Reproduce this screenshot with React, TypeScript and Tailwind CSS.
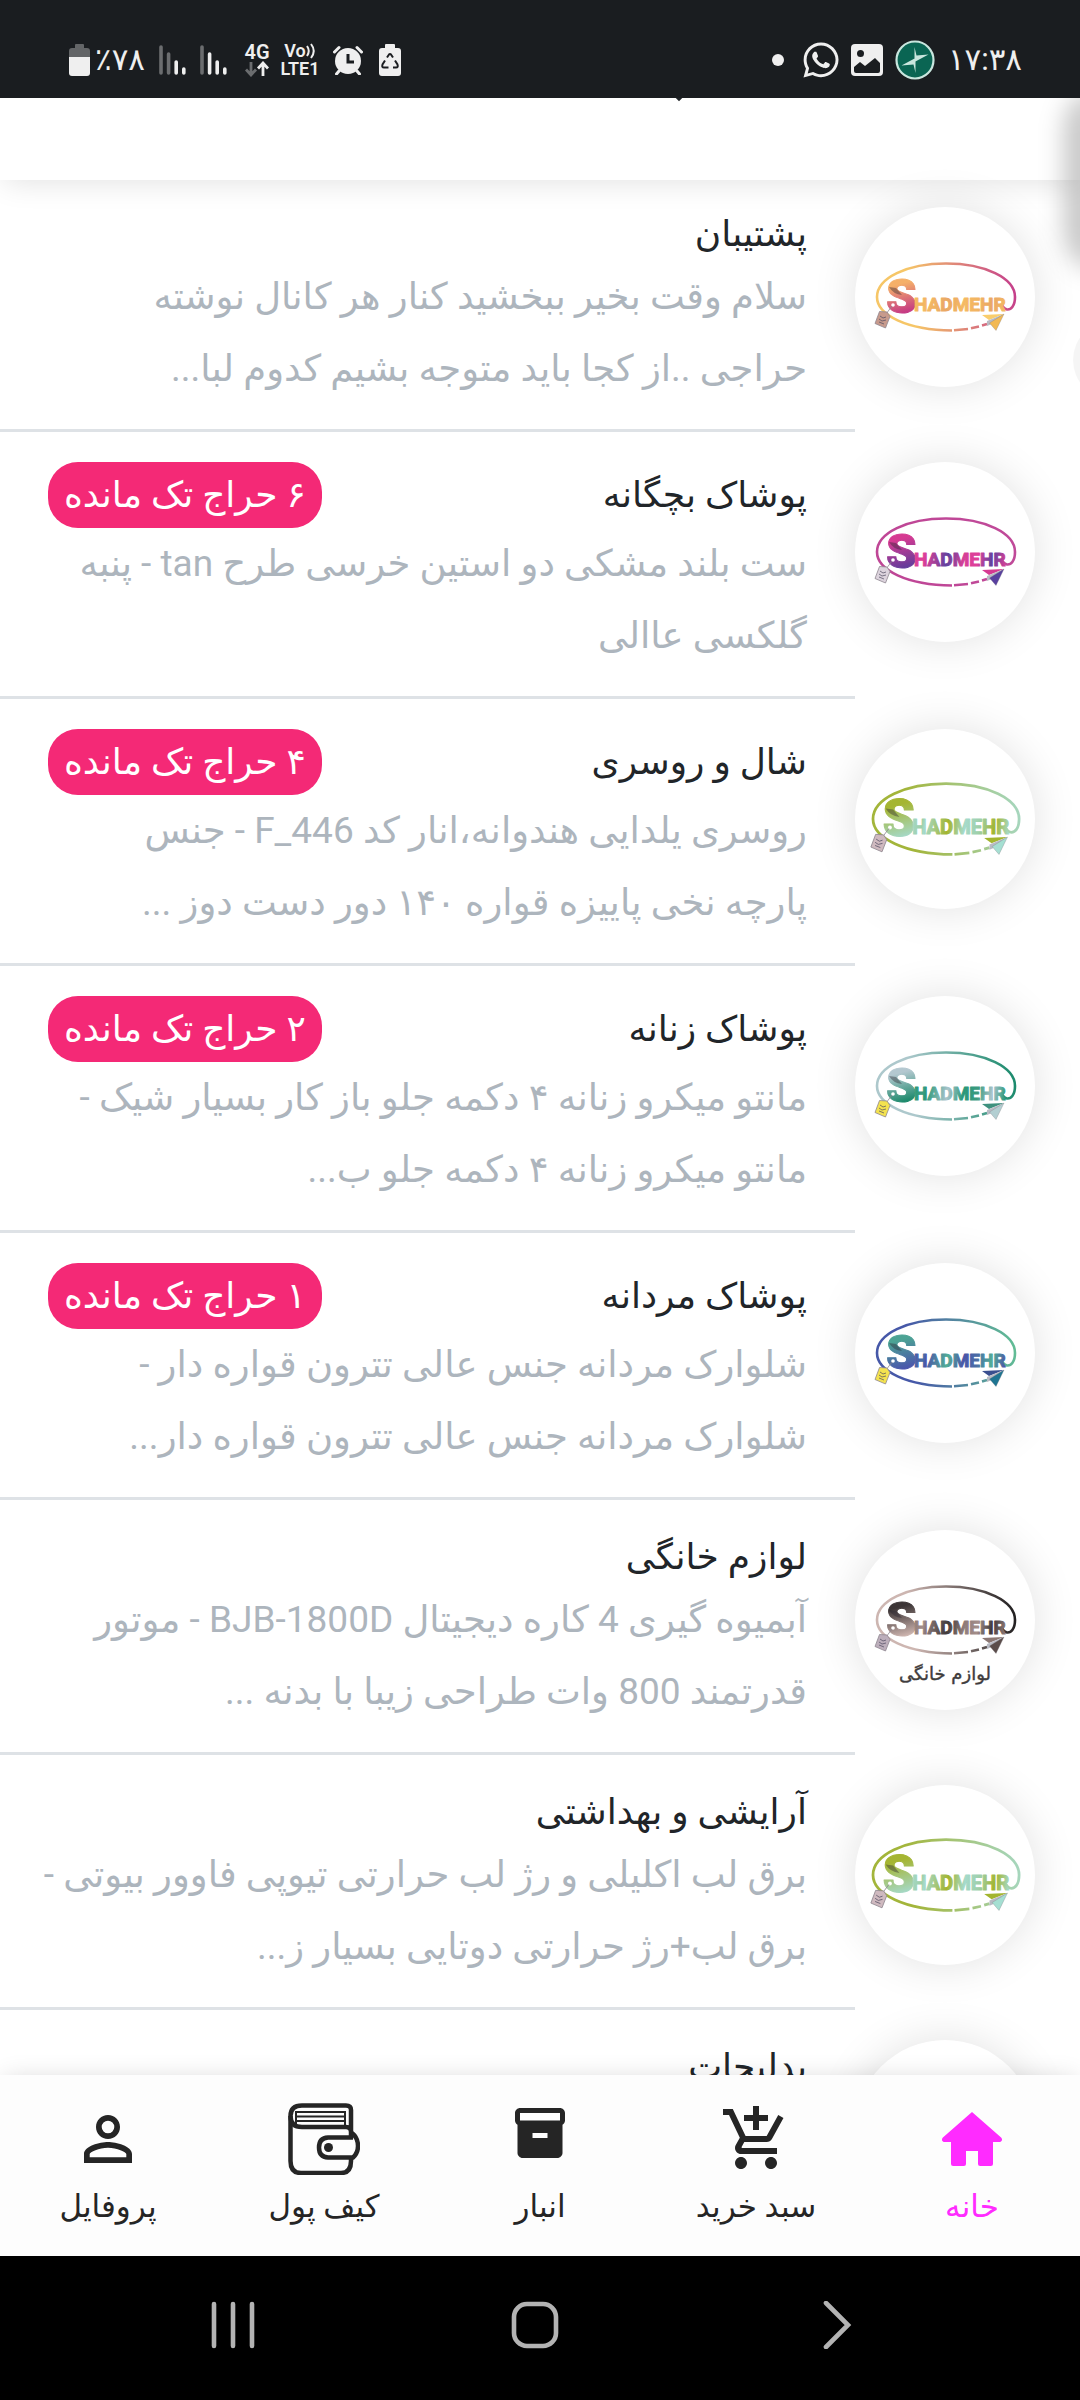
import React from "react";
import { FaWhatsapp } from "react-icons/fa";
import { MdAddShoppingCart, MdInventory2, MdPersonOutline } from "react-icons/md";

type Palette = {
  id: string;
  ring: [string, string];
  big: [string, string];
  letters: [string, string, string];
  plane: [string, string];
  tag: string;
  large?: boolean;
  caption?: string;
};

type Channel = {
  name: string;
  badge?: string;
  lines: string[];
  logo: Palette;
};

const green: Omit<Palette, "id"> = {
  ring: ["#a3b53a", "#a6d6be"],
  big: ["#a5b532", "#a5dacb"],
  letters: ["#a5dacb", "#a3b52e", "#9fcfa8"],
  plane: ["#a3b52e", "#a5dfd2"],
  tag: "#cfb9bf",
  large: true,
};

const teal: Omit<Palette, "id"> = {
  ring: ["#adc8cc", "#1a8a6c"],
  big: ["#b4c8d0", "#108463"],
  letters: ["#2a9878", "#a9c4cb", "#3c9b80"],
  plane: ["#3f917e", "#b3cfd2"],
  tag: "#f3e24f",
};

const channels: Channel[] = [
  {
    name: "پشتیبان",
    lines: ["سلام وقت بخیر ببخشید کنار هر کانال نوشته", "حراجی ..از کجا باید متوجه بشیم کدوم لبا..."],
    logo: {
      id: "support",
      ring: ["#f6c667", "#c53f8b"],
      big: ["#f5b068", "#c12f86"],
      letters: ["#f5ba62", "#e9a765", "#f2b462"],
      plane: ["#f9cd6c", "#f2b953"],
      tag: "#c79a8c",
    },
  },
  {
    name: "پوشاک بچگانه",
    badge: "۶ حراج تک مانده",
    lines: ["ست بلند مشکی دو استین خرسی طرح tan - پنبه", "گلکسی عاالی"],
    logo: {
      id: "kids",
      ring: ["#bf4696", "#c04a99"],
      big: ["#d63a92", "#5a3d9b"],
      letters: ["#d63f96", "#5f419e", "#e0409a"],
      plane: ["#d63a92", "#59409f"],
      tag: "#dcd3dd",
    },
  },
  {
    name: "شال و روسری",
    badge: "۴ حراج تک مانده",
    lines: ["روسری یلدایی هندوانه،انار کد F_446 - جنس", "پارچه نخی پاییزه قواره ۱۴۰ دور دست دوز ..."],
    logo: { id: "scarf", ...green },
  },
  {
    name: "پوشاک زنانه",
    badge: "۲ حراج تک مانده",
    lines: ["مانتو میکرو زنانه ۴ دکمه جلو باز کار بسیار شیک -", "مانتو میکرو زنانه ۴ دکمه جلو ب..."],
    logo: { id: "women", ...teal },
  },
  {
    name: "پوشاک مردانه",
    badge: "۱ حراج تک مانده",
    lines: ["شلوارک مردانه جنس عالی تترون قواره دار -", "شلوارک مردانه جنس عالی تترون قواره دار..."],
    logo: {
      id: "men",
      ring: ["#4658a8", "#62bd95"],
      big: ["#4ca394", "#4a4fae"],
      letters: ["#4a55a8", "#52ae96", "#4a6fa5"],
      plane: ["#3a4f8f", "#1f7592"],
      tag: "#f3e24f",
    },
  },
  {
    name: "لوازم خانگی",
    lines: ["آبمیوه گیری 4 کاره دیجیتال BJB-1800D - موتور", "قدرتمند 800 وات طراحی زیبا با بدنه ..."],
    logo: {
      id: "home",
      ring: ["#cdb6b1", "#211f20"],
      big: ["#3c3536", "#d6bcb6"],
      letters: ["#8d7a78", "#3f393a", "#a48e8a"],
      plane: ["#8b7773", "#5b4d4b"],
      tag: "#bcaebb",
      caption: "لوازم خانگی",
    },
  },
  {
    name: "آرایشی و بهداشتی",
    lines: ["برق لب اکلیلی و رژ لب حرارتی تیوپی فاوور بیوتی -", "برق لب+رژ حرارتی دوتایی بسیار ز..."],
    logo: { id: "beauty", ...green },
  },
  {
    name: "بدلیجات",
    lines: [],
    logo: { id: "jewelry", ...teal },
  },
];

function Logo({ p }: { p: Palette }) {
  const ring = `ring-${p.id}`;
  const big = `big-${p.id}`;
  const letters = `letters-${p.id}`;
  return (
    <svg
      viewBox={p.large ? "5 5 170 170" : "0 0 180 180"}
      direction="ltr"
      className="size-full"
      role="img"
      aria-label="Shadmehr"
    >
      <defs>
        <linearGradient id={ring} gradientUnits="userSpaceOnUse" x1="22" y1="100" x2="160" y2="80">
          <stop offset="0.25" stopColor={p.ring[0]} />
          <stop offset="1" stopColor={p.ring[1]} />
        </linearGradient>
        <linearGradient id={big} gradientUnits="userSpaceOnUse" x1="40" y1="70" x2="50" y2="108">
          <stop offset="0.2" stopColor={p.big[0]} />
          <stop offset="1" stopColor={p.big[1]} />
        </linearGradient>
        <linearGradient id={letters} gradientUnits="userSpaceOnUse" x1="58" y1="88" x2="150" y2="104">
          <stop offset="0" stopColor={p.letters[0]} />
          <stop offset="0.12" stopColor={p.letters[2]} />
          <stop offset="0.15" stopColor={p.letters[0]} />
          <stop offset="0.38" stopColor={p.letters[1]} />
          <stop offset="0.55" stopColor={p.letters[0]} />
          <stop offset="0.7" stopColor={p.letters[2]} />
          <stop offset="0.85" stopColor={p.letters[1]} />
          <stop offset="1" stopColor={p.letters[0]} />
        </linearGradient>
      </defs>
      <g fill="none" stroke={`url(#${ring})`} strokeWidth="2.6">
        <path d="M97 123.500C52 123 22 108 22 90C22 71 52 56.500 91 56.500C130 56.500 160 71 160 90C160 99 156 103 152 102.500C149 102 148 100 147 98" />
        <path d="M99 123.300L113 122M116 121.300L124 119.500M127 118.500L132 117" />
      </g>
      <text
        x="31"
        y="106"
        fontFamily="Roboto, sans-serif"
        fontWeight="900"
        fontSize="49"
        fill={`url(#${big})`}
        stroke={`url(#${big})`}
        strokeWidth="1"
        strokeLinejoin="round"
      >
        S
      </text>
      <path d="M34 80q4 7 13 8l-6-7z" fill="#2b2630" opacity="0.4" />
      <circle cx="38" cy="98" r="1.800" fill="#fff" />
      <text
        x="59"
        y="104"
        fontFamily="Roboto, sans-serif"
        fontWeight="700"
        fontSize="19"
        fill={`url(#${letters})`}
        stroke={`url(#${letters})`}
        strokeWidth="1"
        strokeLinejoin="round"
      >
        HADMEHR
      </text>
      <path d="M37 99L31 107" stroke="#8f8790" strokeWidth="0.800" />
      <path d="M24.500 104.500L32 105L35 109.500L30.500 121L20 116.500Z" fill={p.tag} stroke="#8f8790" strokeWidth="0.800" strokeLinejoin="round" />
      <path d="M25 109l3 2 3-1M24 112l3 2 4-1M24 115l5 2" fill="none" stroke="#4f4a60" strokeWidth="0.700" />
      <path d="M149 107L127 108L134 113Z" fill={p.plane[0]} />
      <path d="M149 107L132 114L132 119L137 117Z" fill="#b9bbc4" />
      <path d="M149 107L134.500 116L141 123.500Z" fill={p.plane[1]} stroke="#77757c" strokeWidth="0.300" />
      {p.caption && (
        <text
          x="90"
          y="150"
          direction="rtl"
          textAnchor="middle"
          fontFamily="'DejaVu Sans', sans-serif"
          fontSize="18"
          fill="#403c3d"
          stroke="#403c3d"
          strokeWidth="0.400"
        >
          {p.caption}
        </text>
      )}
    </svg>
  );
}

function Signal({ dim }: { dim: number }) {
  const bars = [2, 9, 17, 24];
  return (
    <svg viewBox="0 0 28 32" className="h-8 w-7 shrink-0" aria-hidden="true">
      {bars.map((y, i) => (
        <path
          key={y}
          d={`M${2 + i * 7.6} ${y + 1}V29`}
          stroke={i < dim ? "#6b6d6f" : "#efefef"}
          strokeWidth="3.600"
          strokeLinecap="round"
        />
      ))}
    </svg>
  );
}

function StatusBar() {
  return (
    <header
      dir="ltr"
      className="relative z-20 flex h-[98px] shrink-0 items-center justify-between bg-[#1a1d20] pt-[22px] pr-[58px] pl-[69px] text-[#efefef]"
    >
      <div className="flex items-center">
        <svg viewBox="0 0 22 34" className="h-[34px] w-[22px]" aria-label="Battery">
          <path d="M3 5h3V2q0-1 1-1h7q1 0 1 1v3h3q3 0 3 3v6H0V8q0-3 3-3z" fill="#636567" />
          <path d="M0 14h21v16q0 3-3 3H3q-3 0-3-3z" fill="#efefef" />
        </svg>
        <span className="ml-1 w-16 font-['Roboto','DejaVu_Sans',sans-serif] text-[31px] leading-8">٪۷۸</span>
        <Signal dim={2} />
        <span className="w-[13px]" />
        <Signal dim={1} />
        <span className="ml-[15px] flex w-7 flex-col items-center font-['Roboto',sans-serif] text-xl leading-[18px] font-semibold">
          4G
          <svg viewBox="0 0 24 16" className="h-4 w-6" fill="none" strokeWidth="2.800" aria-hidden="true">
            <path d="M6 1v13M1 8.500l5 5.500 5-5.500" stroke="#6b6d6f" />
            <path d="M18 15V2M13 7.500L18 2l5 5.500" stroke="#efefef" />
          </svg>
        </span>
        <span className="ml-2 flex w-[42px] flex-col items-center font-['Roboto',sans-serif] text-lg leading-[18px] font-semibold">
          <span className="flex items-center">
            Vo
            <svg viewBox="0 0 10 18" className="h-[18px] w-2.5" fill="none" stroke="#efefef" strokeWidth="2" aria-hidden="true">
              <path d="M1 4q3.500 5 0 10M5 2q5.500 7 0 14" />
            </svg>
          </span>
          <span>LTE1</span>
        </span>
        <svg viewBox="0 0 30 30" className="ml-3 size-[30px]" aria-label="Alarm">
          <circle cx="15" cy="16" r="13" fill="#efefef" />
          <path d="M1.500 7L6 2.500M28.500 7L24 2.500M6 26l-2.500 3M24 26l2.500 3" stroke="#efefef" strokeWidth="3" strokeLinecap="round" />
          <path d="M15 9v8h6" fill="none" stroke="#1a1d20" strokeWidth="3" />
        </svg>
        <svg viewBox="0 0 22 34" className="ml-4 h-[34px] w-[22px]" aria-label="Battery saver">
          <path d="M3 5h3V2q0-1 1-1h8q1 0 1 1v3h3q3 0 3 3v22q0 3-3 3H3q-3 0-3-3V8q0-3 3-3z" fill="#efefef" />
          <path
            d="M8 14.500l2-3q1-1.200 2 0l2 3M16 17.500l2.500 4q1 3-1.500 3h-3M9.500 24.500H5q-2.500 0-1.500-3l2.500-4"
            fill="none"
            stroke="#1a1d20"
            strokeWidth="2"
          />
        </svg>
      </div>
      <div className="flex items-center">
        <span className="mr-[17px] size-3 rounded-full bg-[#efefef]" />
        <FaWhatsapp className="mr-2.5 size-10" aria-label="WhatsApp" />
        <svg viewBox="0 0 32 32" className="mr-3 size-8" aria-label="Gallery">
          <rect width="32" height="32" rx="4" fill="#efefef" />
          <circle cx="9.500" cy="9.500" r="3.500" fill="#1a1d20" />
          <path d="M3 23l6-5 5 4 10-8 5 5v8q0 2-2 2H5q-2 0-2-2z" fill="#1a1d20" />
        </svg>
        <svg viewBox="0 0 40 40" className="mr-3 size-10" aria-label="App notification">
          <circle cx="20" cy="20" r="18.500" fill="#0a6553" stroke="#c9e6de" strokeWidth="2.200" />
          <path d="M19.500 7l2 8.500 12-1-14 7.500zM20.500 33l-2-8.500-12 1 14-7.500z" fill="#c9e6de" />
        </svg>
        <span className="w-[75px] text-right font-['Roboto','DejaVu_Sans',sans-serif] text-[31px] leading-8">۱۷:۳۸</span>
      </div>
    </header>
  );
}

function ChannelRow({ channel }: { channel: Channel }) {
  return (
    <li>
      <a href="#" className="flex">
        <div className="mr-[45px] w-[180px] shrink-0 pt-[30px]">
          <div className="size-[180px] rounded-full bg-white shadow-[0_0_45px_rgba(0,0,0,0.12)]">
            <Logo p={channel.logo} />
          </div>
        </div>
        <div className="min-w-0 grow border-b-3 border-[#dee2e6] px-12 pt-[30px] pb-6">
          <div className="flex items-center justify-between">
            <h2 className="text-[36px] leading-[54px] text-[#212529]">{channel.name}</h2>
            {channel.badge && (
              <span className="rounded-[30px] bg-[#f42976] px-4 text-[36px] leading-[66px] text-white">
                {channel.badge}
              </span>
            )}
          </div>
          <p className="text-[37px] leading-[72px] whitespace-nowrap text-[#adb5bd]">
            {channel.lines.map((line, i) => (
              <span key={i} className="block">
                {line}
              </span>
            ))}
          </p>
        </div>
      </a>
    </li>
  );
}

function HomeIcon() {
  return (
    <svg viewBox="0 0 24 24" className="size-[72px]" fill="currentColor" aria-hidden="true">
      <path d="M12 3L2.300 11.500C1.700 12.100 2 13 2.900 13H5V20.300Q5 21 5.700 21H9.300Q10 21 10 20.300V16H14V20.300Q14 21 14.700 21H18.300Q19 21 19 20.300V13H21.100C22 13 22.300 12.100 21.700 11.500Z" />
    </svg>
  );
}

function WalletIcon() {
  return (
    <svg viewBox="0 0 72 72" className="size-[72px]" fill="none" stroke="currentColor" strokeWidth="4.500" aria-hidden="true">
      <path d="M2.500 13V58Q2.500 70 13 70H53Q63 70 63 58V56" />
      <path d="M63 34V7Q63 2.500 58 2.500H14Q2.500 2.500 2.500 13Q2.500 24 14 24H58Q63 24 63 29" />
      <path d="M65 34.500H40Q31 35 31 44.500Q31 54 40 54.500H65Q70 50 70 43Q70 35 64 30" />
      <circle cx="40.500" cy="44.500" r="4.500" fill="currentColor" stroke="none" />
      <path d="M57 22V9H8V22M8 13.500H57M8 18H57" strokeWidth="2" />
    </svg>
  );
}

const tabs = [
  { label: "خانه", icon: <HomeIcon />, active: true },
  { label: "سبد خرید", icon: <MdAddShoppingCart className="size-[72px]" /> },
  { label: "انبار", icon: <MdInventory2 className="size-[60px]" /> },
  { label: "کیف پول", icon: <WalletIcon /> },
  { label: "پروفایل", icon: <MdPersonOutline className="size-[72px]" /> },
];

export default function App() {
  return (
    <div
      dir="rtl"
      className="relative flex h-screen flex-col overflow-hidden bg-white font-['Roboto','DejaVu_Sans',sans-serif]"
    >
      <StatusBar />
      <div className="relative h-[82px] shrink-0 bg-white shadow-[0_6px_30px_-4px_rgba(0,0,0,0.12)]">
        <span className="absolute -top-1 right-[398px] size-1.5 rotate-45 bg-[#212529]" />
      </div>
      <main className="relative min-h-0 grow">
        <ul className="-mt-[3px] h-full">
          {channels.map((c) => (
            <ChannelRow key={c.name} channel={c} />
          ))}
        </ul>
      </main>
      <div className="absolute top-[90px] -right-5 z-10 h-[180px] w-9 rounded-l-full bg-black/22 blur-[12px]" />
      <div className="absolute top-80 -right-[73px] z-10 size-20 rounded-full bg-black/4" />
      <nav className="relative z-10 grid h-[181px] shrink-0 grid-cols-5 bg-[#fdfdfd] shadow-[0_0_24px_-4px_rgba(0,0,0,0.16)]">
        {tabs.map((t) => (
          <a
            key={t.label}
            href="#"
            aria-current={t.active ? "page" : undefined}
            className={
              "flex flex-col items-center pt-7 text-[31px] leading-[48px] " +
              (t.active ? "text-[#ff2bff]" : "text-[#252525]")
            }
          >
            <span className="h-20">{t.icon}</span>
            <span>{t.label}</span>
          </a>
        ))}
      </nav>
      <div dir="ltr" className="relative z-20 flex h-36 shrink-0 items-center justify-around bg-black pr-[92px] pb-1.5 pl-[82px]">
        <button type="button" aria-label="Recent apps" className="p-2">
          <svg viewBox="0 0 48 48" className="size-12" stroke="#b3b3b3" strokeWidth="4.600" strokeLinecap="round">
            <path d="M5 3V45M24 3V45M43 3V45" />
          </svg>
        </button>
        <button type="button" aria-label="Home" className="p-2">
          <svg viewBox="0 0 48 48" className="size-12" fill="none" stroke="#b3b3b3" strokeWidth="4.600">
            <rect x="3" y="3" width="42" height="42" rx="13" />
          </svg>
        </button>
        <button type="button" aria-label="Back" className="p-2">
          <svg viewBox="0 0 48 48" className="size-12" fill="none" stroke="#b3b3b3" strokeWidth="4.600" strokeLinecap="round">
            <path d="M13 2L35 24L13 46" />
          </svg>
        </button>
      </div>
    </div>
  );
}
